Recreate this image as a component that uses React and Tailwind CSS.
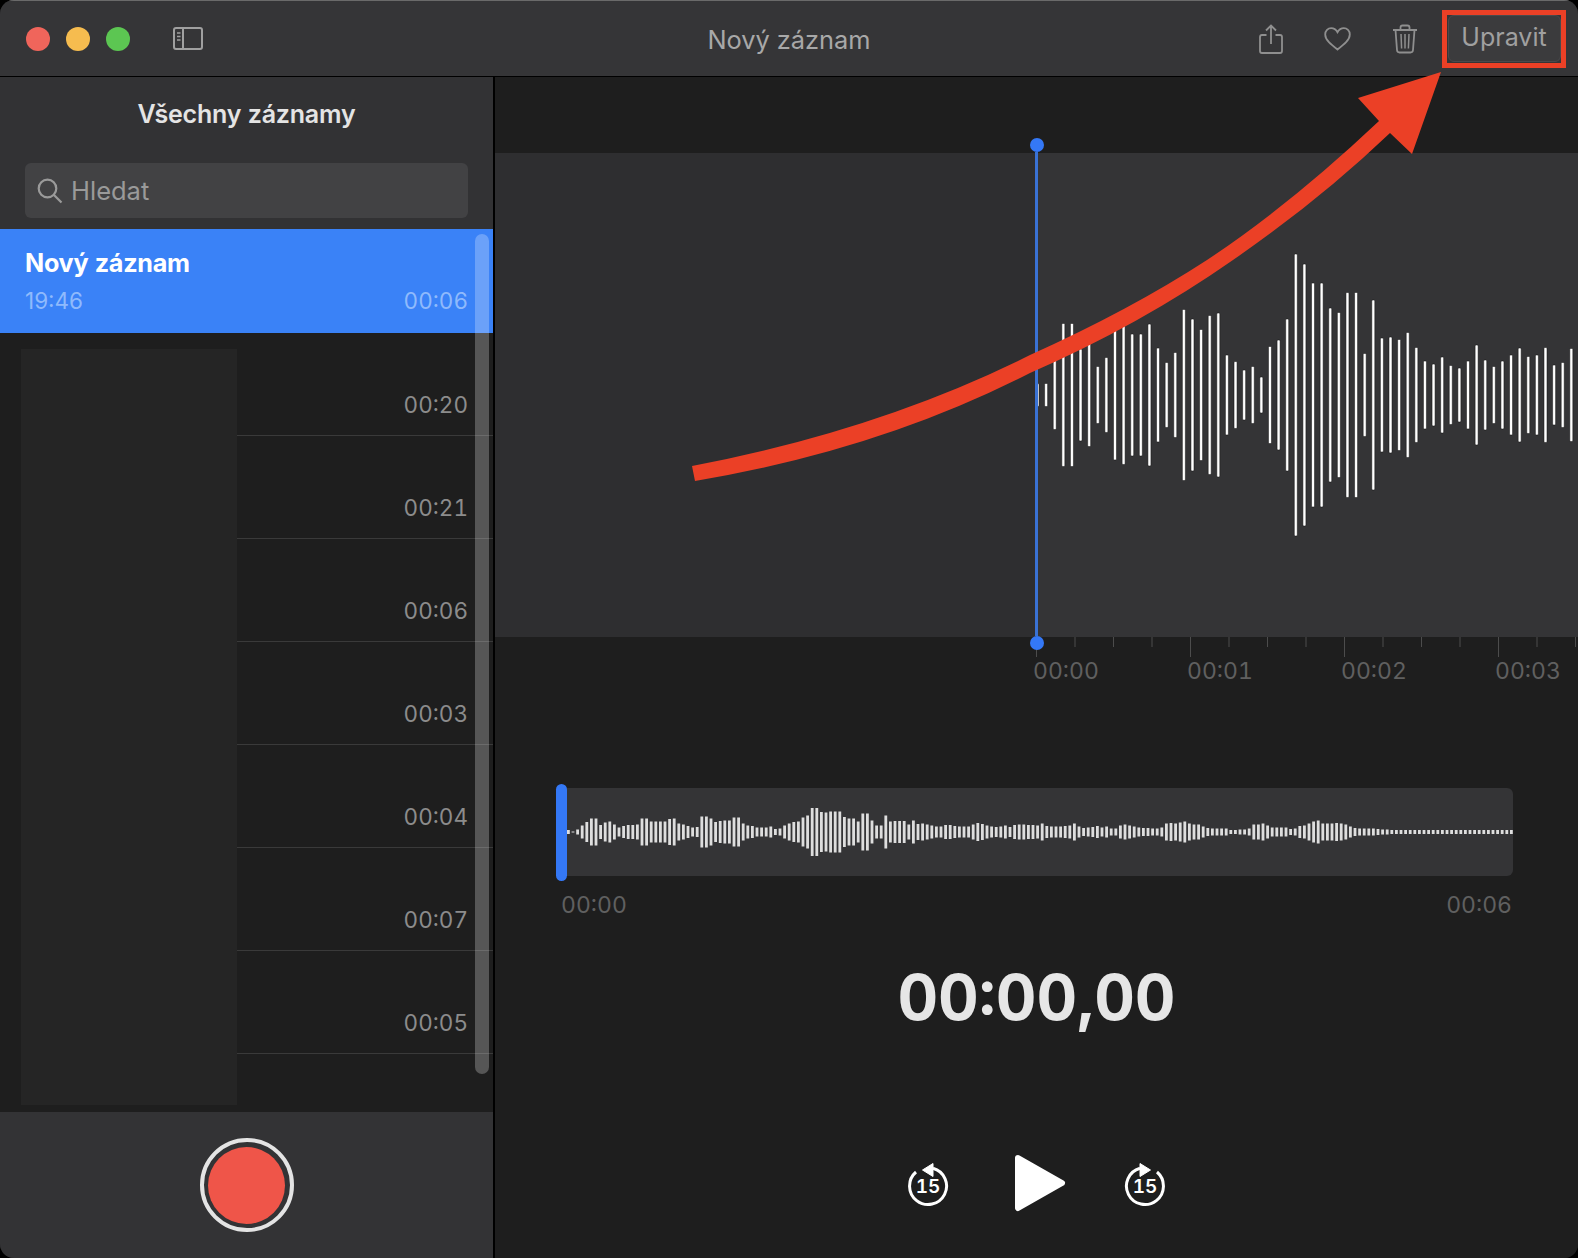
import React from 'react';

const bigWave = [23, 23, 69, 143, 143, 92, 103, 57, 75, 130, 139, 122, 122, 142, 94, 65, 85, 171, 152, 131, 159, 164, 80, 67, 50, 57, 36, 97, 110, 152, 282, 262, 224, 224, 174, 165, 205, 205, 83, 190, 114, 116, 111, 125, 95, 68, 62, 76, 59, 54, 68, 100, 70, 57, 68, 80, 94, 77, 80, 95, 60, 65, 93, 63];

const miniWave = [
  4, 1, 5, 13, 20, 27, 27, 14, 19, 21, 15, 9, 12, 14, 14, 15, 27, 27, 21, 21, 21, 21, 26, 27, 17, 15, 12, 9, 10,
  31, 31, 27, 20, 22, 23, 23, 29, 29, 17, 13, 12, 9, 9, 9, 11, 6, 7, 13, 17, 20, 21, 29, 33, 48, 48, 40, 39, 41, 41, 41,
  30, 27, 27, 21, 37, 37, 23, 13, 13, 33, 21, 22, 22, 22, 15, 23, 16, 17, 15, 13, 11, 11, 14, 14, 12, 11, 11, 11, 15, 18,
  16, 13, 11, 10, 11, 13, 10, 14, 15, 15, 14, 14, 13, 17, 12, 11, 11, 11, 12, 13, 17, 11, 8, 9, 10, 12, 9, 11, 7, 7,
  13, 15, 13, 11, 9, 8, 8, 7, 7, 9, 17, 18, 17, 19, 21, 17, 15, 15, 11, 8, 7, 7, 7, 7, 4, 4, 5, 5, 7,
  15, 15, 17, 13, 9, 9, 9, 9, 6, 7, 12, 13, 17, 21, 23, 17, 17, 17, 18, 17, 15, 11, 8, 7, 7, 7, 7, 6, 5, 5, 4,
  4, 4, 4, 4, 4, 4, 4, 4, 4, 4, 4, 4, 4, 4, 4, 4, 4, 4, 4, 4, 4, 4, 4, 4, 4, 4,
];

const times = ['00:20', '00:21', '00:06', '00:03', '00:04', '00:07', '00:05'];
const rulerLabels = ['00:00', '00:01', '00:02', '00:03'];

const SkipIcon = ({ forward }) => (
  <svg width="44" height="50" viewBox="0 0 44 50" className="shrink-0">
    <g transform={forward ? 'translate(44,0) scale(-1,1)' : undefined}>
      <path d="M27 10.2 A18.5 18.5 0 1 1 10 14" fill="none" stroke="white" strokeWidth="3" />
      <path d="M27 5.5 L27 18.5 L16.5 12 Z" fill="white" strokeLinejoin="round" stroke="white" strokeWidth="1" />
    </g>
    <text x="22" y="35" textAnchor="middle" fill="white" fontSize="19" fontWeight="600" fontFamily="Inter, sans-serif">15</text>
  </svg>
);

const App = () => {
  return (
    <div className="w-[1578px] h-[1258px] bg-black overflow-hidden relative font-['Inter',sans-serif] tabular-nums">
      <div className="w-full h-full rounded-[14px] overflow-hidden flex flex-col bg-[#1e1e1e]">
        {/* title bar */}
        <div className="h-[77px] shrink-0 bg-[#353537] border-t border-t-[#6a6a6a] border-b border-b-black flex items-center relative">
          <div className="flex items-center gap-4 ml-[26px]">
            <span className="w-6 h-6 rounded-full bg-[#f0655b]"></span>
            <span className="w-6 h-6 rounded-full bg-[#f6bc4f]"></span>
            <span className="w-6 h-6 rounded-full bg-[#5cc652]"></span>
          </div>
          <svg width="32" height="26" viewBox="0 0 32 26" className="ml-[42px] text-[#a0a0a0]" fill="none" stroke="currentColor" strokeWidth="2">
            <rect x="2" y="2" width="28" height="21" rx="2" />
            <path d="M11 2 V23" />
            <path d="M5 7 H8.5 M5 10.5 H8.5 M5 14 H8.5" strokeWidth="1.4" />
          </svg>
          <div className="absolute left-0 right-0 top-[21px] text-center text-[25.4px] leading-[36px] text-[#a8a8a8]">Nový záznam</div>
          <div className="ml-auto flex items-center relative">
            <svg width="24" height="30" viewBox="0 0 24 30" fill="none" stroke="#8f8f8f" strokeWidth="1.8" className="mr-[41px]">
              <path d="M7.5 11 H3 Q1 11 1 13 V27 Q1 29 3 29 H21 Q23 29 23 27 V13 Q23 11 21 11 H16.5" />
              <path d="M12 20 V2 M7 6.5 L12 1.5 L17 6.5" />
            </svg>
            <svg width="27" height="24" viewBox="0 0 27 24" fill="none" stroke="#8f8f8f" strokeWidth="1.8" className="mr-[41px]">
              <path d="M13.5 22.5 C7 17.5 1.2 13 1.2 7.5 C1.2 3.8 4 1.2 7.2 1.2 C9.8 1.2 12 2.6 13.5 5.2 C15 2.6 17.2 1.2 19.8 1.2 C23 1.2 25.8 3.8 25.8 7.5 C25.8 13 20 17.5 13.5 22.5 Z" />
            </svg>
            <svg width="26" height="30" viewBox="0 0 26 30" fill="none" stroke="#8f8f8f" strokeWidth="1.8" className="mr-[24px]">
              <path d="M1 6 H25 M8.5 6 V3.5 Q8.5 1.5 10.5 1.5 H15.5 Q17.5 1.5 17.5 3.5 V6" />
              <path d="M3.5 6 L5 26 Q5.2 28.5 7.5 28.5 H18.5 Q20.8 28.5 21 26 L22.5 6" />
              <path d="M9 10 L9.6 24.5 M13 10 V24.5 M17 10 L16.4 24.5" strokeWidth="1.5" />
            </svg>
            <div className="w-[124px] h-[58px] mr-[12px] border-[5px] border-[#eb4026] flex items-center justify-center">
              <div className="w-[113px] h-[47px] rounded-[6px] bg-[#3b3b3d] border border-[#4a4a4c] flex items-center justify-center text-[25px] text-[#a0a0a0] pb-[2px]">
                Upravit
              </div>
            </div>
          </div>
        </div>

        <div className="flex-1 flex min-h-0">
          {/* sidebar */}
          <div className="w-[495px] shrink-0 border-r-2 border-r-black flex flex-col relative">
            <div className="h-[152px] shrink-0 bg-[#323234] px-[25px] flex flex-col">
              <div className="text-center text-[25px] leading-[30px] font-semibold text-[#e4e4e4] mt-[22px] tracking-[-0.2px]">Všechny záznamy</div>
              <div className="mt-[34px] h-[55px] rounded-[6px] bg-[#424244] flex items-center pl-3 gap-2">
                <svg width="26" height="26" viewBox="0 0 26 26" fill="none" stroke="#9a9a9a" strokeWidth="2.2">
                  <circle cx="10.5" cy="10.5" r="8.8" />
                  <path d="M17 17 L24.5 24.5" />
                </svg>
                <span className="text-[25.5px] text-[#9a9a9a] pt-[2px]">Hledat</span>
              </div>
            </div>
            <div className="h-[104px] shrink-0 bg-[#3a82f7] px-[25px] pt-[18px]">
              <div className="text-[25.2px] leading-[32px] font-bold text-white tracking-[-0.3px]">Nový záznam</div>
              <div className="flex justify-between text-[22.5px] leading-[30px] text-[#8fbafc] mt-[7px]">
                <span className="[font-variant-numeric:normal]">19:46</span>
                <span>00:06</span>
              </div>
            </div>
            <div className="flex-1 min-h-0 bg-[#1e1e1e] relative">
              {times.map((t) => (
                <div key={t} className="h-[103px] ml-[237px] border-b border-b-[#3a3a3a] flex items-end justify-end pr-[25px] pb-[15px] text-[22.5px] leading-[30px] text-[#8c8c8c]">
                  {t}
                </div>
              ))}
              <div className="absolute left-[21px] top-[16px] w-[216px] h-[756px] bg-[#252525]"></div>
            </div>
            <div className="h-[146px] shrink-0 bg-[#333335] flex items-center justify-center">
              <div className="w-[94px] h-[94px] rounded-full border-[4px] border-[#e4e4e4] flex items-center justify-center">
                <div className="w-[77px] h-[77px] rounded-full bg-[#ef5549]"></div>
              </div>
            </div>
            <div className="absolute left-[475px] top-[157px] w-[14px] h-[840px] rounded-full bg-white/25"></div>
          </div>

          {/* main */}
          <div className="flex-1 min-w-0 bg-[#1e1e1e] flex flex-col relative overflow-hidden">
            <div className="mt-[76px] h-[484px] shrink-0 flex">
              <div className="w-[541px] shrink-0 bg-[#2e2e30]"></div>
              <div className="flex-1 min-w-0 bg-[#343436] overflow-hidden">
                <svg width="542" height="484" viewBox="0 0 542 484">
                  {bigWave.map((h, i) => (
                    <rect key={i} x={i * 8.61} y={242 - h / 2} width="3" height={h} rx="1" fill="#ffffff" stroke="#111" strokeWidth="0.5" />
                  ))}
                </svg>
              </div>
            </div>
            <svg width="1083" height="22" viewBox="0 0 1083 22" className="shrink-0">
              {Array.from({ length: 16 }).map((_, i) => (
                <rect key={i} x={541 + i * 38.5} y="0" width="1" height={i % 4 === 0 ? 20 : 10} fill="#4c4c4c" />
              ))}
            </svg>
            <div className="flex pl-[538px] text-[23px] leading-[30px] text-[#606060] shrink-0 -mt-[3px]">
              {rulerLabels.map((l) => (
                <div key={l} className="w-[154px] shrink-0">{l}</div>
              ))}
            </div>
            {/* overview */}
            <div className="ml-[62px] mr-[65px] mt-[102px] h-[88px] shrink-0 rounded-[6px] bg-[#343436] relative">
              <svg width="956" height="88" viewBox="0 0 956 88" className="block">
                {miniWave.map((h, i) => (
                  <rect key={i} x={10 + i * 4.6} y={44 - h / 2} width="2.8" height={h} fill="#dedede" />
                ))}
              </svg>
              <div className="absolute -left-[1px] -top-[4px] w-[11px] h-[97px] rounded-full bg-[#3478f6]"></div>
            </div>
            <div className="flex justify-between ml-[66px] mr-[66px] mt-[14px] text-[23px] leading-[30px] text-[#606060] shrink-0">
              <span>00:00</span>
              <span>00:06</span>
            </div>
            <div className="text-center text-[63px] leading-[76px] font-bold text-[#e6e6e6] mt-[39px] shrink-0">00:00,00</div>
            <div className="flex items-center justify-center mt-[118px] shrink-0">
              <SkipIcon />
              <svg width="52" height="60" viewBox="0 0 52 60" className="ml-[64px] mr-[57px]">
                <path d="M4 5 L48 30 L4 55 Z" fill="white" stroke="white" strokeWidth="6" strokeLinejoin="round" />
              </svg>
              <SkipIcon forward />
            </div>
            {/* playhead */}
            <div className="absolute left-[538px] top-[61px] w-[7px] h-[512px] flex flex-col items-center">
              <span className="w-[14px] h-[14px] rounded-full bg-[#3478f6] shrink-0"></span>
              <span className="w-[3px] flex-1 bg-[#3a72d4]"></span>
              <span className="w-[14px] h-[14px] rounded-full bg-[#3478f6] shrink-0"></span>
            </div>
          </div>
        </div>
      </div>

      {/* annotation arrow */}
      <svg className="absolute inset-0 pointer-events-none" width="1578" height="1258" viewBox="0 0 1578 1258">
        <path
          d="M692 466 Q880 430 1030 355 Q1130 310 1207 260 Q1290 205 1379 121 L1358 98 L1441 72 L1412 154 L1390 133 Q1320 200 1233 260 Q1140 325 1030 373 Q880 450 695 481 Z"
          fill="#eb4026"
        />
      </svg>
    </div>
  );
};

export default App;
